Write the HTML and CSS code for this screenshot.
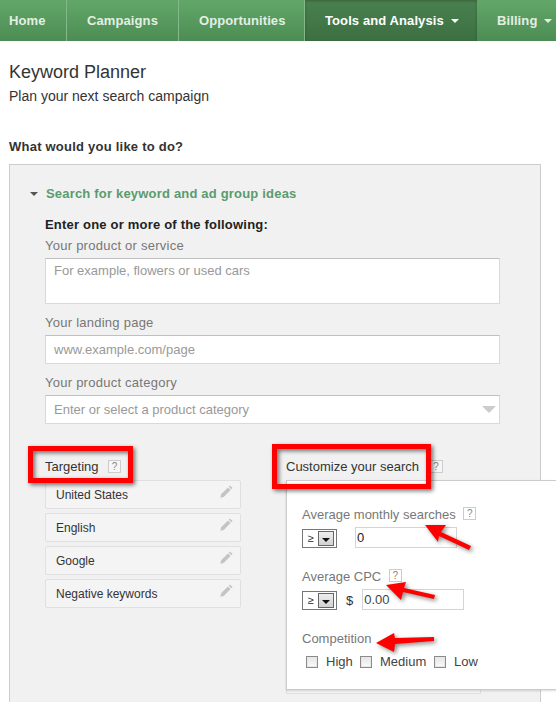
FILE: index.html
```html
<!DOCTYPE html>
<html lang="en">
<head>
<meta charset="utf-8">
<title>Keyword Planner</title>
<link rel="stylesheet" href="styles.css">
</head>
<body>
<svg width="0" height="0" class="defs">
  <symbol id="pencil" viewBox="0 0 12 12"><path d="M9.2.4 11.6 2.8 10.5 3.9 8.1 1.5ZM7.4 2.2 9.8 4.6 3.4 11 .3 11.7 1 8.6Z"/></symbol>
</svg>
<nav class="nav">
  <a class="nav-item home">Home</a>
  <a class="nav-item campaigns">Campaigns</a>
  <a class="nav-item opportunities">Opportunities</a>
  <a class="nav-item tools active">Tools and Analysis <i class="caret"></i></a>
  <a class="nav-item billing">Billing <i class="caret"></i></a>
</nav>
<header class="head">
  <h1>Keyword Planner</h1>
  <p>Plan your next search campaign</p>
</header>
<h2 class="question">What would you like to do?</h2>
<section class="panel">
  <h3 class="panel-title"><i class="disclosure"></i>Search for keyword and ad group ideas</h3>
  <div class="form">
    <div class="enter">Enter one or more of the following:</div>
    <label class="label">Your product or service</label>
    <div class="field area">For example, flowers or used cars</div>
    <label class="label">Your landing page</label>
    <div class="field">www.example.com/page</div>
    <label class="label">Your product category</label>
    <div class="field combo">Enter or select a product category<i class="combo-arrow"></i></div>
    <div class="columns">
      <div class="targeting">
        <div class="col-title">Targeting <span class="help">?</span></div>
        <div class="rows">
          <div class="row">United States<svg class="pencil"><use href="#pencil"/></svg></div>
          <div class="row">English<svg class="pencil"><use href="#pencil"/></svg></div>
          <div class="row">Google<svg class="pencil"><use href="#pencil"/></svg></div>
          <div class="row">Negative keywords<svg class="pencil"><use href="#pencil"/></svg></div>
        </div>
      </div>
      <div class="customize">
        <div class="col-title">Customize your search <span class="help">?</span></div>
        <div class="under-card"></div>
        <div class="popup">
          <div class="pop-label">Average monthly searches <span class="help">?</span></div>
          <div class="control">
            <span class="select"><span class="select-val">≥</span><span class="select-btn"><i></i></span></span>
            <span class="num first">0</span>
          </div>
          <div class="pop-label second">Average CPC <span class="help">?</span></div>
          <div class="control">
            <span class="select"><span class="select-val">≥</span><span class="select-btn"><i></i></span></span>
            <span class="dollar">$</span>
            <span class="num">0.00</span>
          </div>
          <div class="pop-label third">Competition</div>
          <div class="checks">
            <span class="check high"><i></i>High</span>
            <span class="check medium"><i></i>Medium</span>
            <span class="check low"><i></i>Low</span>
          </div>
        </div>
      </div>
    </div>
  </div>
</section>
<svg class="marks" width="556" height="702" viewBox="0 0 556 702" aria-hidden="true">
  <g class="mark">
    <rect x="30.5" y="448.5" width="100" height="32" />
    <rect x="274.5" y="446.5" width="154" height="40" />
  </g>
  <g class="arrow">
    <path d="M425 525 446 525 441 532 471 546 469 550 439 536 438 542Z"/>
    <path d="M386 585 406 582 404 588 435 595 434 599 403 592 401 600Z"/>
    <path d="M376 643 394 633 395 638 434 637 434 641 395 644 394 652Z"/>
  </g>
</svg>
</body>
</html>
```
FILE: styles.css
```css
* { box-sizing: border-box; }
html, body { margin: 0; padding: 0; }
body {
  position: relative;
  width: 556px;
  height: 702px;
  overflow: hidden;
  background: #fff;
  color: #333;
  font-family: "Liberation Sans", Arial, sans-serif;
  font-size: 13px;
}
.defs { position: absolute; }
i { display: inline-block; }

.nav {
  display: flex;
  height: 41px;
  background: linear-gradient(#62a768, #4c8c54);
  overflow: hidden;
}
.nav-item {
  flex: none;
  height: 41px;
  line-height: 41px;
  color: #e3efe3;
  font-weight: bold;
  font-size: 13px;
  letter-spacing: .1px;
  white-space: nowrap;
  border-right: 1px solid #84b98a;
}
.home { width: 67px; padding-left: 9px; }
.campaigns { width: 112px; padding-left: 20px; }
.opportunities { width: 126px; padding-left: 20px; }
.tools {
  width: 172px;
  padding-left: 20px;
  color: #fff;
  border-right: 0;
  background: linear-gradient(#4a814f, #3c6f42);
  box-shadow: inset 0 1px 3px rgba(0,0,0,.25);
}
.billing { width: 79px; padding-left: 20px; border-right: 0; }
.caret {
  width: 0; height: 0;
  margin-left: 3px;
  vertical-align: 2px;
  border: 4px solid transparent;
  border-top-color: currentColor;
  border-bottom: 0;
}

.head { padding: 21px 0 0 9px; }
.head h1 { margin: 0; font-size: 18px; font-weight: normal; line-height: 20px; color: #333; }
.head p { margin: 6px 0 0; font-size: 14px; line-height: 16px; color: #333; }
.question { margin: 35px 0 0 9px; font-size: 13px; letter-spacing: .23px; font-weight: bold; line-height: 16px; color: #333; }

.panel {
  margin: 9px 0 0 9px;
  width: 532px;
  height: 560px;
  padding: 21px 0 0 20px;
  background: #f1f1f1;
  border: 1px solid #ccc;
}
.panel-title {
  margin: 0;
  display: flex;
  align-items: center;
  font-size: 13px;
  letter-spacing: .19px;
  line-height: 16px;
  font-weight: bold;
  color: #5a9b6e;
}
.disclosure {
  width: 0; height: 0;
  margin-right: 8px;
  border: 4px solid transparent;
  border-top-color: #555;
  border-bottom: 0;
}
.form { padding: 15px 0 0 15px; width: 470px; }
.enter { font-size: 13px; letter-spacing: .2px; font-weight: bold; line-height: 16px; color: #222; }
.label { display: block; margin-top: 11px; line-height: 15px; color: #777; letter-spacing: .25px; }
.enter + .label { margin-top: 5px; }
.field {
  height: 29px;
  margin-top: 5px;
  padding: 0 8px;
  line-height: 27px;
  background: #fff;
  border: 1px solid #d9d9d9;
  border-top-color: #c0c0c0;
  color: #999;
  font-size: 13px;
}
.area { height: 46px; line-height: 24px; }
.combo { position: relative; }
.combo-arrow {
  position: absolute;
  right: 3px; top: 10px;
  width: 0; height: 0;
  border: 7px solid transparent;
  border-top-color: #ccc;
  border-bottom: 0;
}
.columns { display: flex; margin-top: 35px; }
.targeting { width: 241px; flex: none; }
.customize { position: relative; flex: none; }
.col-title { height: 21px; line-height: 16px; font-size: 13px; color: #333; white-space: nowrap; }
.help {
  display: inline-block;
  width: 13px; height: 13px;
  margin-left: 6px;
  vertical-align: 1px;
  background: #f6f6f6;
  border: 1px solid #ccc;
  color: #888;
  font-size: 10px;
  line-height: 11px;
  text-align: center;
}
.customize .col-title .help { margin-left: 7px; }
.rows { display: flex; flex-direction: column; gap: 4px; width: 196px; }
.row {
  position: relative;
  height: 29px;
  padding-left: 10px;
  line-height: 28px;
  font-size: 12px;
  color: #333;
  background: #f4f4f4;
  border: 1px solid #e0e0e0;
  border-radius: 2px;
}
.pencil { position: absolute; right: 7px; top: 4px; width: 13px; height: 13px; fill: #c4c4c4; }
.under-card {
  position: absolute;
  left: 0; top: 216px;
  width: 195px; height: 19px;
  background: #f4f4f4;
  border: 1px solid #e0e0e0;
}
.popup {
  position: absolute;
  left: 0; top: 21px;
  width: 290px; height: 210px;
  padding: 26px 0 0 15px;
  background: #fff;
  border: 1px solid #ccc;
  box-shadow: 0 1px 2px rgba(0,0,0,.15);
}
.pop-label { line-height: 15px; color: #777; white-space: nowrap; font-size: 13px; }
.pop-label .help { margin-left: 4px; vertical-align: 2px; background: #fff; }
.second { margin-top: 21px; }
.third { margin-top: 21px; }
.control { display: flex; align-items: flex-end; height: 21px; margin-top: 5px; }
.select {
  flex: none;
  display: flex;
  width: 35px; height: 19px;
  background: #fff;
  border: 1px solid #777;
  font-size: 11px;
  color: #222;
}
.select-val { width: 15px; text-align: center; line-height: 16px; }
.select-btn {
  display: flex;
  align-items: center;
  justify-content: center;
  width: 16px; height: 15px;
  margin-top: 1px;
  background: linear-gradient(#eee, #d2d2d2);
  border: 1px solid #666;
}
.select-btn i {
  width: 0; height: 0;
  margin-top: 2px;
  border: 4px solid transparent;
  border-top-color: #111;
  border-bottom: 0;
}
.num {
  flex: none;
  width: 102px; height: 21px;
  margin-left: 18px;
  padding-left: 1px;
  line-height: 19px;
  font-size: 13px;
  background: #fff;
  border: 1px solid #d4d4d4;
  color: #444;
}
.num.first { color: #222; }
.dollar { margin-left: 9px; font-size: 13px; line-height: 19px; color: #333; }
.dollar + .num { margin-left: 9px; }
.checks { display: flex; height: 16px; margin-top: 8px; padding-left: 4px; font-size: 13px; color: #444; }
.check { display: flex; align-items: center; white-space: nowrap; line-height: 16px; }
.check i {
  width: 12px; height: 12px;
  margin-right: 8px;
  background: linear-gradient(#e4e4e4, #fbfbfb);
  border: 1px solid #8a8a8a;
  box-shadow: inset 0 0 0 1px #e8e8e8;
}
.high { width: 54px; }
.medium { width: 74px; }

.marks { position: absolute; left: 0; top: 0; pointer-events: none; overflow: visible; }
.mark rect {
  fill: none;
  stroke: #f00;
  stroke-width: 5;
  filter: drop-shadow(2px 2px 2px rgba(0,0,0,.55));
}
.arrow path {
  fill: #f00;
  filter: drop-shadow(2px 2px 2px rgba(0,0,0,.45));
}
```
